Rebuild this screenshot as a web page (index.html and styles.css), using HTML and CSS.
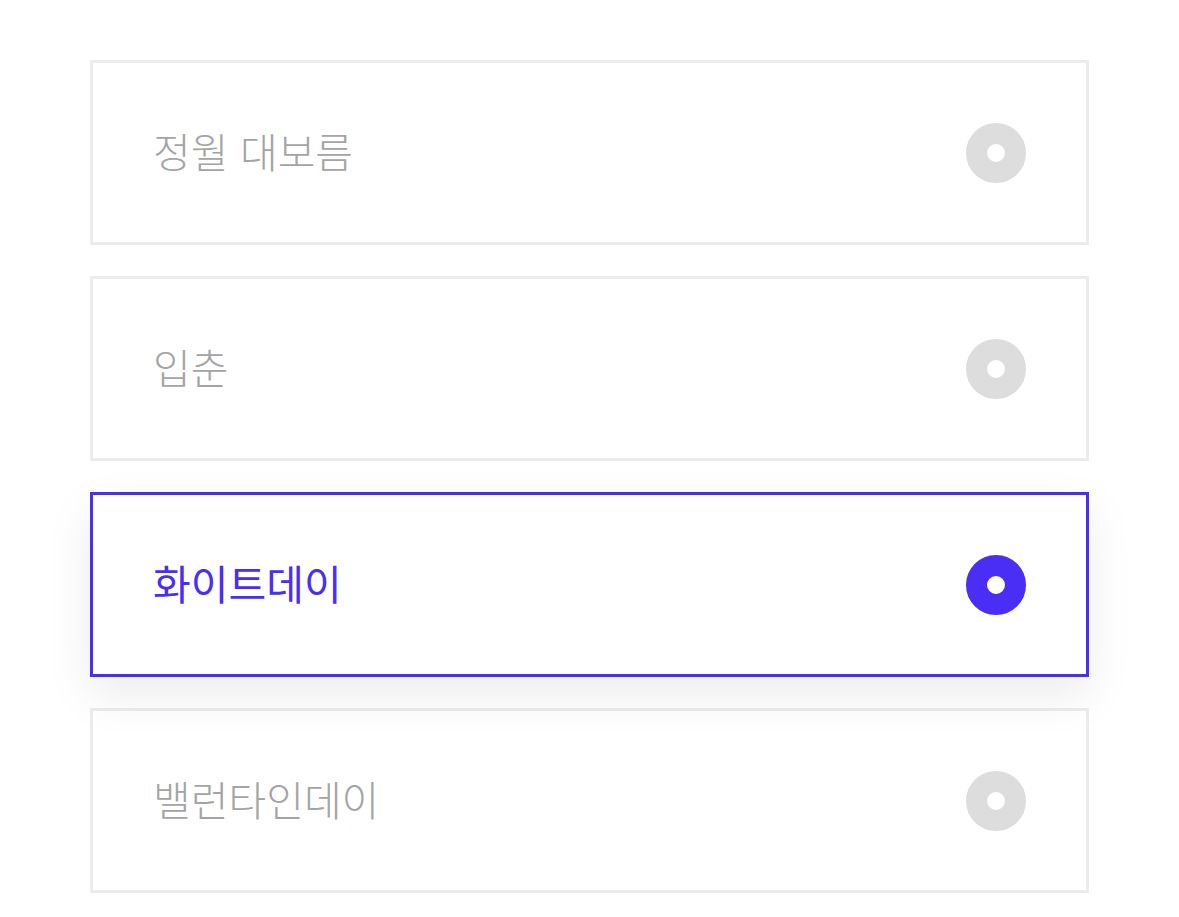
FILE: index.html
```html
<!DOCTYPE html>
<html lang="ko">
<head>
<meta charset="utf-8">
<link rel="stylesheet" href="styles.css">
</head>
<body>
<div class="list">
  <div class="option"><span class="label">정월 대보름</span><span class="radio"></span></div>
  <div class="option"><span class="label">입춘</span><span class="radio"></span></div>
  <div class="option selected"><span class="label">화이트데이</span><span class="radio"></span></div>
  <div class="option"><span class="label">밸런타인데이</span><span class="radio"></span></div>
</div>
</body>
</html>
```
FILE: styles.css
```css
html, body { margin: 0; padding: 0; background: #fff; }
body { font-family: "Noto Sans CJK KR", "Noto Sans", sans-serif; }
.list {
  display: flex;
  flex-direction: column;
  gap: 31px;
  padding: 60px 90px 0 90px;
}
.option {
  position: relative;
  box-sizing: border-box;
  height: 185px;
  border: 3px solid #ececec;
  background: #fff;
  display: flex;
  align-items: center;
  justify-content: space-between;
  padding: 0 60px;
}
.label {
  font-size: 41px;
  font-weight: 300;
  color: #a4a4a4;
  letter-spacing: 0;
  line-height: 1;
  margin-top: -4px;
}
.radio {
  width: 60px;
  height: 60px;
  border-radius: 50%;
  box-sizing: border-box;
  background: #fff;
  border: 21px solid #dddddd;
}
.selected {
  border-color: #4a2ef5;
  z-index: 1;
  box-shadow: 0 18px 44px rgba(0, 0, 0, 0.08);
}
.selected .label { color: #4a2ef5; font-weight: 400; }
.selected .radio { border-color: #4a2ef5; }
```
